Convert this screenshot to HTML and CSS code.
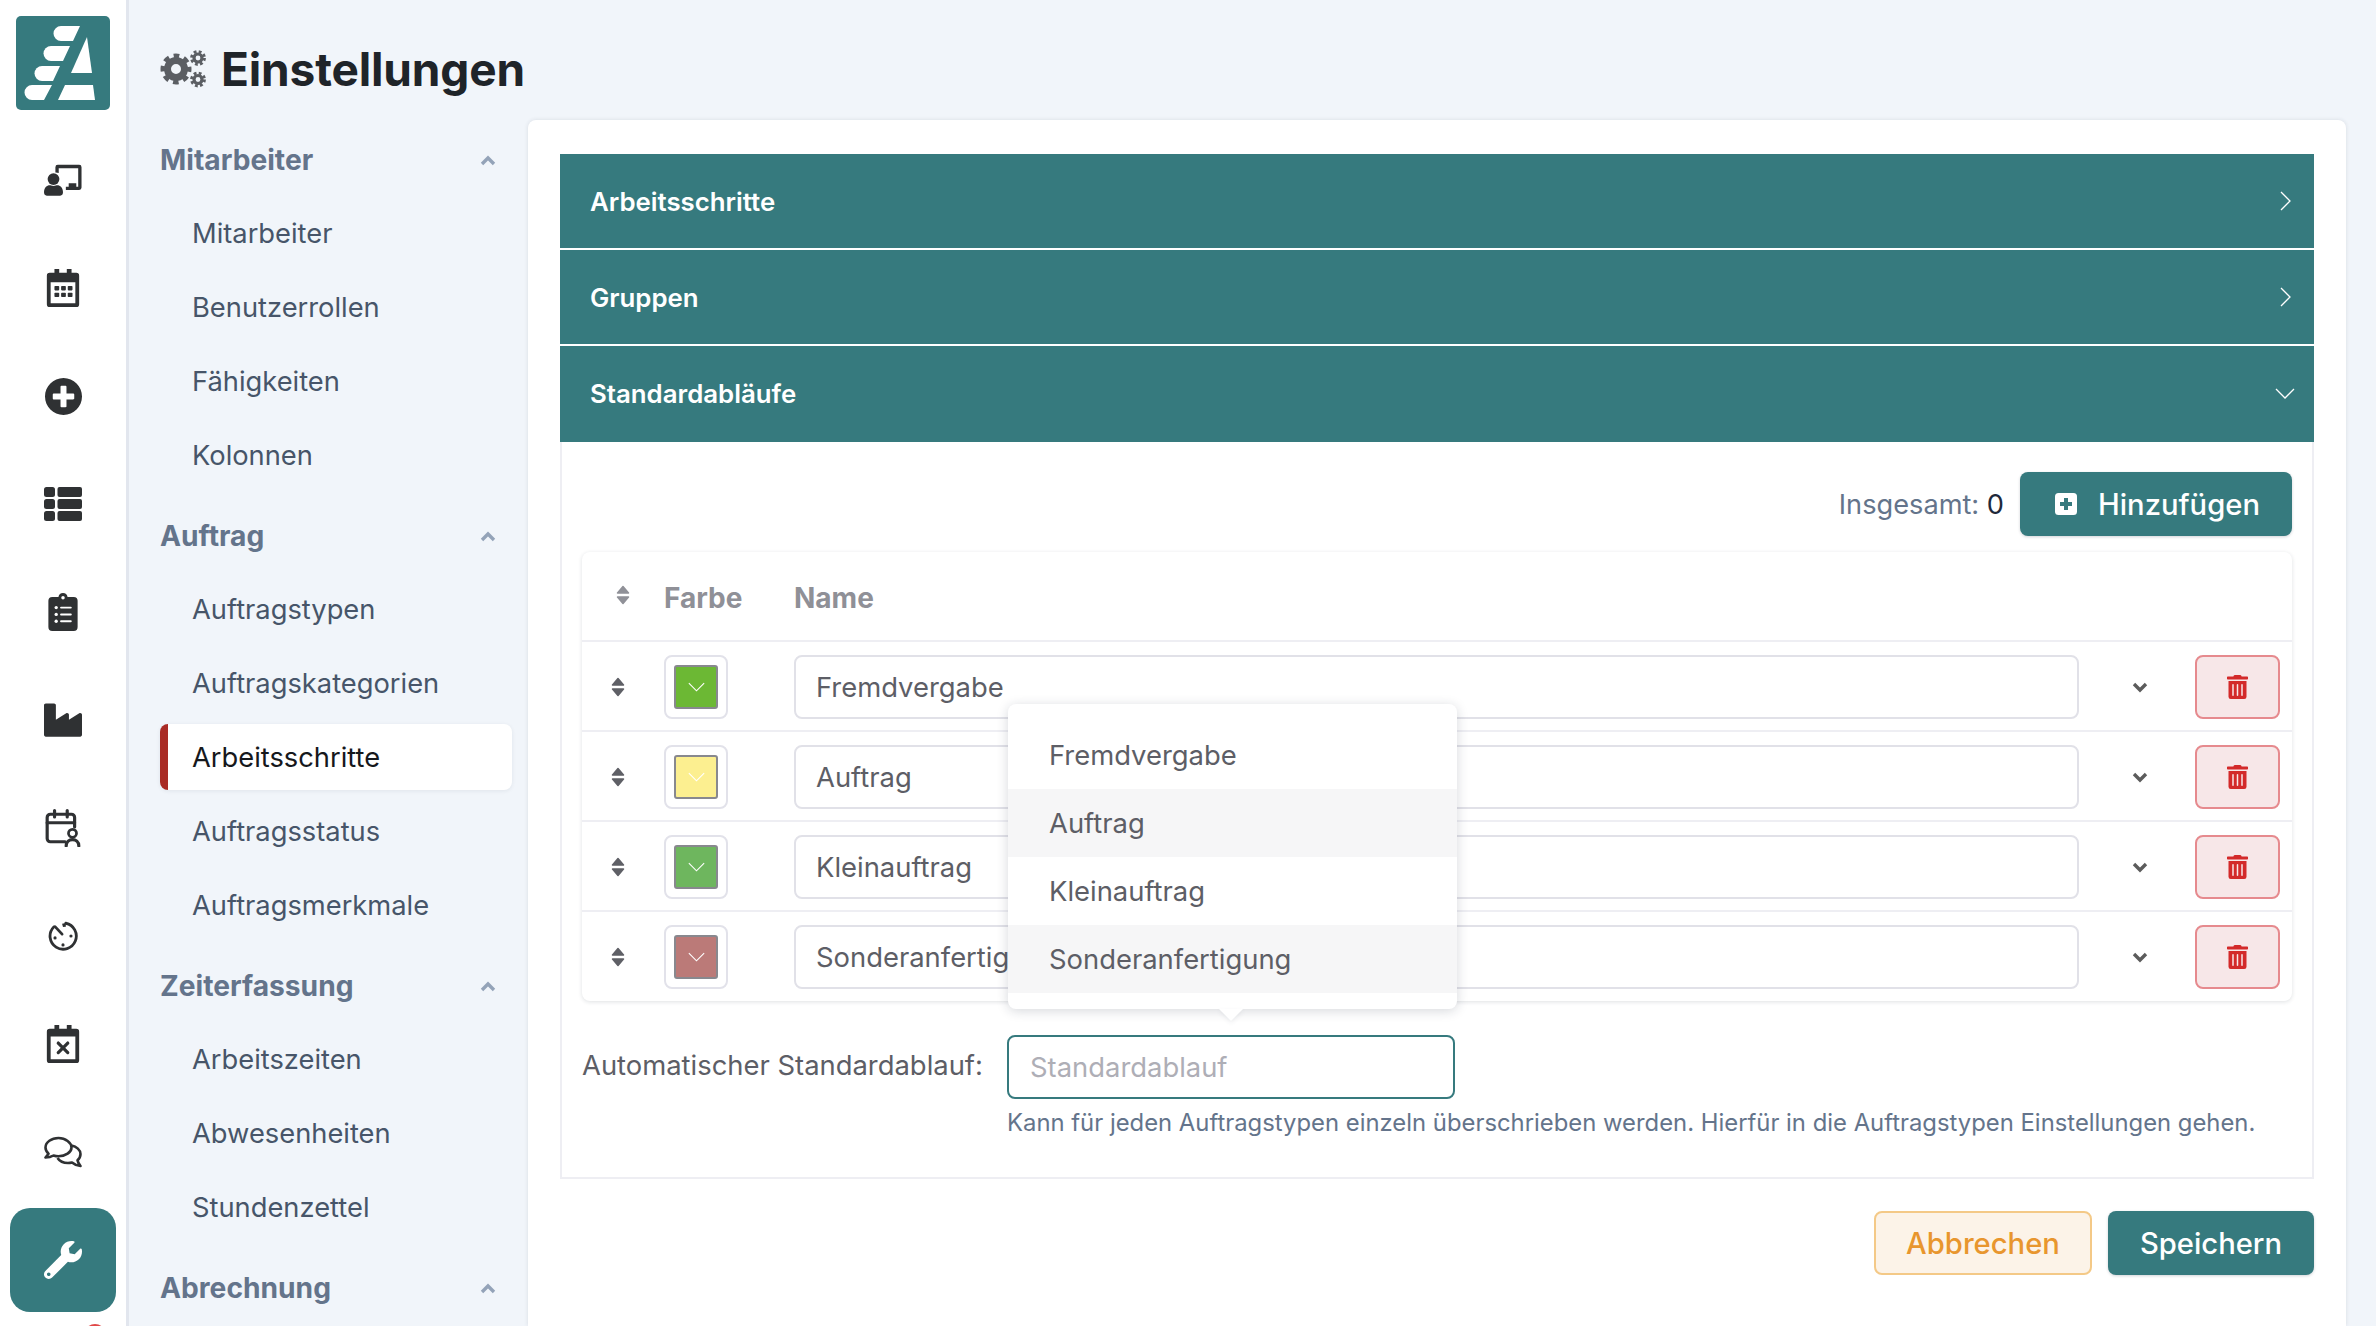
FILE: index.html
```html
<!DOCTYPE html>
<html lang="de">
<head>
<meta charset="utf-8">
<title>Einstellungen</title>
<link rel="stylesheet" href="styles.css">
</head>
<body>
<svg class="defs" width="0" height="0" aria-hidden="true">
  <defs>
    <symbol id="sort" viewBox="0 0 14 20"><path d="M7 1.5 12.5 8H1.5ZM1.5 12h11L7 18.500Z" fill="currentColor" stroke="currentColor" stroke-width="1.500" stroke-linejoin="round"/></symbol>
    <symbol id="thin-down" viewBox="0 0 20 11"><path d="M1 1l9 9 9-9" fill="none" stroke="currentColor" stroke-width="1.300"/></symbol>
    <symbol id="thin-right" viewBox="0 0 11 20"><path d="M1 1l9 9-9 9" fill="none" stroke="currentColor" stroke-width="1.300"/></symbol>
    <symbol id="up" viewBox="0 0 16 11"><path d="M2 9l6-6 6 6" fill="none" stroke="currentColor" stroke-width="3.400"/></symbol>
    <symbol id="down-bold" viewBox="0 0 16 11"><path d="M2 2l6 6 6-6" fill="none" stroke="currentColor" stroke-width="3.400"/></symbol>
    <symbol id="trash" viewBox="0 0 448 512"><path fill="currentColor" d="M32 464a48 48 0 0 0 48 48h288a48 48 0 0 0 48-48V128H32zm272-256a16 16 0 0 1 32 0v224a16 16 0 0 1-32 0zm-96 0a16 16 0 0 1 32 0v224a16 16 0 0 1-32 0zm-96 0a16 16 0 0 1 32 0v224a16 16 0 0 1-32 0zM432 32H312l-9.400-18.700A24 24 0 0 0 281.100 0H166.800a23.720 23.720 0 0 0-21.400 13.300L136 32H16A16 16 0 0 0 0 48v32a16 16 0 0 0 16 16h416a16 16 0 0 0 16-16V48a16 16 0 0 0-16-16z"/></symbol>
  </defs>
</svg>
<div class="app">
  <nav class="rail">
    <svg class="logo" viewBox="0 0 94 94">
      <rect width="94" height="94" rx="5" fill="#367a7e"/>
      <g fill="#fff">
        <path d="M45 10H64L57 25H45A7.500 7.500 0 0 1 45 10Z"/>
        <path d="M35 30H54L47 45H35A7.500 7.500 0 0 1 35 30Z"/>
        <path d="M26 50H44L37 65H26A7.500 7.500 0 0 1 26 50Z"/>
        <path d="M16 69H36L28 84H16A7.500 7.500 0 0 1 16 69Z"/>
        <path d="M71 21 76 57H55Z"/>
        <path d="M49 69H77L79 84H42Z"/>
      </g>
    </svg>
    <div class="rail-items">
      <a class="rail-item">
        <svg viewBox="0 0 40 34" class="ri"><path d="M12 3.500A2.500 2.500 0 0 1 14.500 1H37a2.500 2.500 0 0 1 2.500 2.500V25A2.500 2.500 0 0 1 37 27.500H23V24h3v-3.500h8V24h2V4.500H15.500v5A10 10 0 0 0 12 9Z" fill="currentColor"/><circle cx="10" cy="16" r="6.200" fill="currentColor"/><path d="M0 30c0-5 3-7.500 6-7.500 1 0 2 .7 4 .7s3-.7 4-.7c3 0 6 2.500 6 7.500 0 2-1 3.500-3 3.500H3C1 33.500 0 32 0 30Z" fill="currentColor"/></svg>
      </a>
      <a class="rail-item">
        <svg viewBox="0 0 34 40" class="ri"><path fill-rule="evenodd" d="M8 0h5v4h8V0h5v4h5a3 3 0 0 1 3 3v30a3 3 0 0 1-3 3H3a3 3 0 0 1-3-3V7a3 3 0 0 1 3-3h5ZM4 14v22h26V14Z" fill="currentColor"/><g fill="currentColor"><rect x="8" y="18" width="5" height="4.500" rx=".8"/><rect x="15" y="18" width="5" height="4.500" rx=".8"/><rect x="22" y="18" width="5" height="4.500" rx=".8"/><rect x="8" y="25" width="5" height="4.500" rx=".8"/><rect x="15" y="25" width="5" height="4.500" rx=".8"/><rect x="22" y="25" width="5" height="4.500" rx=".8"/></g></svg>
      </a>
      <a class="rail-item">
        <svg viewBox="8 8 496 496" class="ri ri-38"><path fill="currentColor" d="M256 8C119 8 8 119 8 256s111 248 248 248 248-111 248-248S393 8 256 8zm144 276c0 6.600-5.400 12-12 12h-92v92c0 6.600-5.400 12-12 12h-56c-6.600 0-12-5.400-12-12v-92h-92c-6.600 0-12-5.400-12-12v-56c0-6.600 5.400-12 12-12h92v-92c0-6.600 5.400-12 12-12h56c6.600 0 12 5.400 12 12v92h92c6.600 0 12 5.400 12 12v56z"/></svg>
      </a>
      <a class="rail-item">
        <svg viewBox="0 0 38 34" class="ri"><g fill="currentColor"><rect width="11" height="10" rx="2.500"/><rect y="12" width="11" height="10" rx="2.500"/><rect y="24" width="11" height="10" rx="2.500"/><rect x="13.500" width="24.500" height="10" rx="2"/><rect x="13.500" y="12" width="24.500" height="10" rx="2"/><rect x="13.500" y="24" width="24.500" height="10" rx="2"/></g></svg>
      </a>
      <a class="rail-item">
        <svg viewBox="0 0 30 39" class="ri ri-30"><path fill="currentColor" fill-rule="evenodd" d="M15 0a5 5 0 0 1 4.700 4H26a4 4 0 0 1 4 4v27a4 4 0 0 1-4 4H4a4 4 0 0 1-4-4V8a4 4 0 0 1 4-4h6.300A5 5 0 0 1 15 0Zm0 3a1.800 1.800 0 1 0 0 3.600A1.800 1.800 0 0 0 15 3Z"/><g fill="#fff"><circle cx="8" cy="15" r="1.700"/><circle cx="8" cy="22" r="1.700"/><circle cx="8" cy="29" r="1.700"/><rect x="12" y="14" width="12" height="2" rx="1"/><rect x="12" y="21" width="12" height="2" rx="1"/><rect x="12" y="28" width="12" height="2" rx="1"/></g></svg>
      </a>
      <a class="rail-item">
        <svg viewBox="0 32 512 448" class="ri"><path fill="currentColor" d="M475.115 163.781L336 252.309v-68.280c0-18.916-20.931-30.399-36.885-20.248L160 252.309V56c0-13.255-10.745-24-24-24H24C10.745 32 0 42.745 0 56v400c0 13.255 10.745 24 24 24h464c13.255 0 24-10.745 24-24V184.029c0-18.917-20.931-30.399-36.885-20.248z"/></svg>
      </a>
      <a class="rail-item">
        <svg viewBox="0 0 34 36" class="ri"><g fill="none" stroke="currentColor" stroke-width="3" stroke-linecap="round" stroke-linejoin="round"><path d="M19 31H5a3 3 0 0 1-3-3V8a3 3 0 0 1 3-3h20a3 3 0 0 1 3 3v9"/><path d="M2 13h26M9 1.500v6M21 1.500v6"/></g><circle cx="26" cy="23" r="3.800" fill="none" stroke="currentColor" stroke-width="2.600"/><path d="M20 35c0-4 3-6 6-6s6 2 6 6" fill="none" stroke="currentColor" stroke-width="3" stroke-linecap="round"/></svg>
      </a>
      <a class="rail-item">
        <svg viewBox="0 0 32 32" class="ri ri-30"><g fill="none" stroke="currentColor" stroke-width="3" stroke-linecap="round"><path d="M19 2.400A14 14 0 1 1 6 6.500"/><path d="M7.500 6 15 14"/></g><g fill="currentColor"><circle cx="16" cy="25.500" r="1.700"/><circle cx="7.500" cy="18" r="1.700"/><circle cx="24.500" cy="16" r="1.700"/><path d="M15 3l4-1v4l-3 .5Z"/></g></svg>
      </a>
      <a class="rail-item">
        <svg viewBox="0 0 34 40" class="ri"><path fill-rule="evenodd" d="M8 0h5v4h8V0h5v4h5a3 3 0 0 1 3 3v30a3 3 0 0 1-3 3H3a3 3 0 0 1-3-3V7a3 3 0 0 1 3-3h5ZM4 12v24h26V12Z" fill="currentColor"/><path d="M12 19l10 10M22 19 12 29" stroke="currentColor" stroke-width="3.400" stroke-linecap="round"/></svg>
      </a>
      <a class="rail-item">
        <svg viewBox="0 0 38 31" class="ri"><g fill="none" stroke="currentColor" stroke-width="2.600" stroke-linejoin="round"><path d="M14.500 1.500C7.500 1.500 1.500 5.700 1.500 11c0 2.600 1.300 4.700 3 6.300L1.500 21c3 0 6-.8 8-2 1.500.5 3.200.800 5 .800 7 0 13-4 13-8.800s-6-9.500-13-9.500Z"/><path d="M27.500 9c5 1 9 4.500 9 8.500 0 2.600-1.200 4.700-3 6.300.4 2.500 2 4.500 3 5.700-3.500-.2-6.500-1.800-8.500-3.500-1.200.3-2.700.5-4 .5-4.500 0-8.500-2-10.500-5"/></g></svg>
      </a>
      <a class="rail-item rail-active">
        <svg viewBox="0 0 512 512" class="ri"><path fill="currentColor" d="M507.730 109.100c-2.240-9.030-13.540-12.090-20.120-5.510l-74.360 74.360-67.880-11.310-11.310-67.880 74.360-74.360c6.620-6.620 3.430-17.900-5.660-20.160-47.380-11.740-99.550.91-136.580 37.930-39.640 39.640-50.550 97.100-34.050 147.200L18.740 402.760c-24.990 24.990-24.990 65.510 0 90.500 24.990 24.990 65.510 24.990 90.500 0l213.210-213.210c50.120 16.710 107.470 5.680 147.370-34.220 37.070-37.070 49.700-89.320 37.910-136.730zM64 472c-13.250 0-24-10.750-24-24 0-13.260 10.750-24 24-24s24 10.740 24 24c0 13.250-10.750 24-24 24z"/></svg>
      </a>
      <span class="badge"></span>
    </div>
  </nav>
  <main class="main">
    <header class="page-head">
      <svg class="gears" viewBox="0 0 46 38">
        <g fill="none" stroke="currentColor">
          <circle cx="16" cy="19" r="8.500" stroke-width="7"/>
          <circle cx="16" cy="19" r="13" stroke-width="5" stroke-dasharray="5.500 4.710" stroke-dashoffset="2.700"/>
          <circle cx="38" cy="8" r="4" stroke-width="3.200"/>
          <circle cx="38" cy="8" r="6.500" stroke-width="2.800" stroke-dasharray="2.800 2.300"/>
          <circle cx="38" cy="29.500" r="4" stroke-width="3.200"/>
          <circle cx="38" cy="29.500" r="6.500" stroke-width="2.800" stroke-dasharray="2.800 2.300"/>
        </g>
      </svg>
      <h1 class="page-title">Einstellungen</h1>
    </header>
    <div class="columns">
      <aside class="side">
        <section class="group">
          <h2 class="group-head">Mitarbeiter<svg class="group-chev"><use href="#up"/></svg></h2>
          <ul class="group-list">
            <li class="side-item">Mitarbeiter</li>
            <li class="side-item">Benutzerrollen</li>
            <li class="side-item">Fähigkeiten</li>
            <li class="side-item">Kolonnen</li>
          </ul>
        </section>
        <section class="group">
          <h2 class="group-head">Auftrag<svg class="group-chev"><use href="#up"/></svg></h2>
          <ul class="group-list">
            <li class="side-item">Auftragstypen</li>
            <li class="side-item">Auftragskategorien</li>
            <li class="side-item side-active">Arbeitsschritte</li>
            <li class="side-item">Auftragsstatus</li>
            <li class="side-item">Auftragsmerkmale</li>
          </ul>
        </section>
        <section class="group">
          <h2 class="group-head">Zeiterfassung<svg class="group-chev"><use href="#up"/></svg></h2>
          <ul class="group-list">
            <li class="side-item">Arbeitszeiten</li>
            <li class="side-item">Abwesenheiten</li>
            <li class="side-item">Stundenzettel</li>
          </ul>
        </section>
        <section class="group">
          <h2 class="group-head">Abrechnung<svg class="group-chev"><use href="#up"/></svg></h2>
        </section>
      </aside>
      <section class="card">
        <div class="acc-head">Arbeitsschritte<svg class="acc-right"><use href="#thin-right"/></svg></div>
        <div class="acc-head">Gruppen<svg class="acc-right"><use href="#thin-right"/></svg></div>
        <div class="acc-head acc-open">Standardabläufe<svg class="acc-down"><use href="#thin-down"/></svg></div>
        <div class="acc-panel">
          <div class="toolbar">
            <span class="total">Insgesamt: <b class="total-num">0</b></span>
            <button class="btn btn-primary btn-add">
              <svg class="plus-square" viewBox="0 0 22 22"><rect width="22" height="22" rx="3.500" fill="#fff"/><path d="M11 5v12M5 11h12" stroke="#367a7e" stroke-width="4"/></svg>
              Hinzufügen
            </button>
          </div>
          <div class="table">
            <div class="row row-head">
              <svg class="sort sort-head"><use href="#sort"/></svg>
              <span>Farbe</span>
              <span class="cell-name">Name</span>
            </div>
            <div class="row">
              <svg class="sort"><use href="#sort"/></svg>
              <div class="color-btn"><span class="swatch sw-green"><svg class="sw-chev"><use href="#thin-down"/></svg></span></div>
              <input class="field cell-name" value="Fremdvergabe" readonly>
              <svg class="row-chev"><use href="#down-bold"/></svg>
              <button class="del"><svg class="trash"><use href="#trash"/></svg></button>
            </div>
            <div class="row">
              <svg class="sort"><use href="#sort"/></svg>
              <div class="color-btn"><span class="swatch sw-yellow"><svg class="sw-chev"><use href="#thin-down"/></svg></span></div>
              <input class="field cell-name" value="Auftrag" readonly>
              <svg class="row-chev"><use href="#down-bold"/></svg>
              <button class="del"><svg class="trash"><use href="#trash"/></svg></button>
            </div>
            <div class="row">
              <svg class="sort"><use href="#sort"/></svg>
              <div class="color-btn"><span class="swatch sw-lime"><svg class="sw-chev"><use href="#thin-down"/></svg></span></div>
              <input class="field cell-name" value="Kleinauftrag" readonly>
              <svg class="row-chev"><use href="#down-bold"/></svg>
              <button class="del"><svg class="trash"><use href="#trash"/></svg></button>
            </div>
            <div class="row row-last">
              <svg class="sort"><use href="#sort"/></svg>
              <div class="color-btn"><span class="swatch sw-rose"><svg class="sw-chev"><use href="#thin-down"/></svg></span></div>
              <input class="field cell-name" value="Sonderanfertigung" readonly>
              <svg class="row-chev"><use href="#down-bold"/></svg>
              <button class="del"><svg class="trash"><use href="#trash"/></svg></button>
            </div>
          </div>
          <div class="auto-row">
            <label class="auto-label">Automatischer Standardablauf:</label>
            <div class="auto-control">
              <input class="field field-focus" placeholder="Standardablauf">
              <ul class="dropdown">
                <li class="dd-item">Fremdvergabe</li>
                <li class="dd-item dd-shade">Auftrag</li>
                <li class="dd-item">Kleinauftrag</li>
                <li class="dd-item dd-shade">Sonderanfertigung</li>
              </ul>
              <p class="hint">Kann für jeden Auftragstypen einzeln überschrieben werden. Hierfür in die Auftragstypen Einstellungen gehen.</p>
            </div>
          </div>
        </div>
        <div class="actions">
          <button class="btn btn-cancel">Abbrechen</button>
          <button class="btn btn-primary btn-save">Speichern</button>
        </div>
      </section>
    </div>
  </main>
</div>
</body>
</html>
```

FILE: styles.css
```css
* { box-sizing: border-box; }
html, body { margin: 0; height: 100%; overflow: hidden; }
body { font-family: Inter, "Liberation Sans", sans-serif; font-size: 28px; background: #f1f5fa; color: #1e293b; }
.defs { position: absolute; }
ul { list-style: none; margin: 0; padding: 0; }
button, input { font-family: inherit; }

.app { display: flex; height: 1326px; overflow: hidden; }

/* icon rail */
.rail { width: 129px; flex: none; background: #fff; border-right: 3px solid #e2e6ee; padding: 16px 0 0 10px; color: #2f3133; }
.logo { display: block; width: 94px; height: 94px; margin-left: 6px; }
.rail-items { position: relative; margin-top: 16px; width: 106px; }
.rail-item { display: flex; align-items: center; justify-content: center; height: 108px; }
.ri { width: 38px; height: 38px; }
.ri-38 { width: 37px; height: 37px; }
.ri-30 { width: 30px; height: 38px; }
.rail-active { background: #367a7e; color: #fff; border-radius: 20px; height: 104px; margin-top: 2px; }
.badge { position: absolute; left: 74px; top: 1198px; width: 22px; height: 22px; border-radius: 50%; background: #e04848; }

/* main */
.main { flex: 1; min-width: 0; display: flex; flex-direction: column; }
.page-head { height: 120px; flex: none; display: flex; align-items: center; gap: 15px; padding: 18px 0 0 31px; }
.gears { width: 46px; height: 38px; color: #5b5e63; }
.page-title { margin: 0; font-size: 46px; font-weight: 700; letter-spacing: -0.15px; color: #1f2429; line-height: 1; }

.columns { flex: 1; display: flex; min-height: 0; }

/* settings sidebar */
.side { width: 399px; flex: none; padding: 11px 16px 0 31px; }
.group { margin-bottom: 19px; }
.group-head { display: flex; align-items: center; justify-content: space-between; height: 58px; margin: 0; font-size: 28.200px; font-weight: 700; color: #64748b; }
.group-chev { width: 16px; height: 11px; margin-right: 16px; color: #94a3b8; }
.group-list { display: flex; flex-direction: column; gap: 8px; margin-top: 11px; }
.side-item { display: flex; align-items: center; height: 66px; padding-left: 32px; color: #475569; font-size: 27.300px; }
.side-active { background: #fff; color: #16181c; border-left: 8px solid #a92b25; padding-left: 24px; border-radius: 8px; box-shadow: 0 1px 4px rgba(30, 41, 59, .08); }

/* card */
.card { flex: 1; min-width: 0; margin-right: 30px; padding: 34px 32px 0; background: #fff; border-radius: 8px 8px 0 0; box-shadow: 0 0 4px rgba(30, 41, 59, .12); }
.acc-head { display: flex; align-items: center; justify-content: space-between; height: 94px; margin-bottom: 2px; padding: 0 19px 0 30px; background: #367a7e; color: #fff; font-size: 25.800px; font-weight: 600; }
.acc-open { height: 96px; margin-bottom: 0; padding-bottom: 1px; }
.acc-right { width: 11px; height: 20px; margin-right: 4px; }
.acc-down { width: 20px; height: 11px; }
.acc-panel { height: 737px; padding: 30px 20px 0; border: 2px solid #eeeef3; border-top: 0; }

.toolbar { display: flex; align-items: center; justify-content: flex-end; gap: 16px; }
.total { color: #64748b; font-size: 27.200px; }
.total-num { color: #1e293b; font-weight: 400; }
.btn { display: inline-flex; align-items: center; justify-content: center; height: 64px; border-radius: 8px; font-size: 29.200px; font-weight: 500; border: 0; }
.btn-primary { background: #367a7e; color: #fff; box-shadow: 0 1px 3px rgba(30, 41, 59, .2); }
.btn-add { width: 272px; gap: 21px; padding: 0 0 0 3px; }
.plus-square { width: 22px; height: 22px; }

/* table */
.table { margin-top: 16px; background: #fff; border-radius: 8px; box-shadow: 0 1px 4px rgba(30, 41, 59, .14); }
.row { display: grid; grid-template-columns: 82px 64px 66px 1285px 116px 85px; align-items: center; height: 90px; padding: 2px 12px 0 0; border-bottom: 2px solid #eeeef3; color: #5d5e66; }
.cell-name { grid-column: 4; }
.row-head { padding-top: 4px; font-weight: 700; color: #8f9097; font-size: 28px; }
.row-last { height: 89px; padding-top: 1px; border-bottom: 0; }
.sort { width: 14px; height: 20px; margin-left: 29px; color: #5f6066; }
.sort-head { margin-left: 34px; margin-top: -6px; color: #909198; }
.color-btn { display: flex; align-items: center; justify-content: center; width: 64px; height: 64px; border: 2px solid #e2e2ea; border-radius: 8px; }
.swatch { display: flex; align-items: center; justify-content: center; width: 44px; height: 44px; border: 2px solid #88888e; border-radius: 3px; color: #fff; }
.sw-green { background: #6cb834; }
.sw-yellow { background: #fcef90; }
.sw-lime { background: #6eb65e; }
.sw-rose { background: #bb7a78; }
.sw-chev { width: 17px; height: 10px; }
.field { display: block; width: 100%; height: 64px; padding: 0 20px; border: 2px solid #e1e1e8; border-radius: 8px; background: #fff; color: #5d5e66; font-size: 27.400px; outline: 0; }
.field::placeholder { color: #aeaeb6; opacity: 1; }
.field-focus { border-color: #367a7e; padding-left: 21px; }
.row-chev { width: 16px; height: 11px; margin-left: 53px; color: #5c5c5c; }
.del { display: flex; align-items: center; justify-content: center; width: 85px; height: 64px; padding: 0; background: #f7e7e8; border: 2px solid #e68a8e; border-radius: 8px; color: #d32a2a; }
.trash { width: 21px; height: 24px; }

/* automatic row */
.auto-row { display: flex; align-items: flex-start; margin-top: 34px; }
.auto-label { width: 425px; flex: none; padding-top: 13px; color: #5d5e66; font-size: 27.400px; line-height: 34px; }
.auto-control { position: relative; flex: 1; min-width: 0; }
.auto-control .field { width: 448px; }
.hint { margin: 9px 0 0; color: #64748b; font-size: 23.850px; line-height: 30px; white-space: nowrap; }

/* dropdown over table */
.dropdown { position: absolute; left: 1px; top: -331px; width: 449px; height: 305px; padding: 17px 0 16px; background: #fff; border-radius: 8px; box-shadow: 0 2px 12px rgba(30, 41, 59, .18); }
.dropdown::after { content: ""; position: absolute; left: 211px; bottom: -12px; width: 0; height: 0; border-left: 12px solid transparent; border-right: 12px solid transparent; border-top: 12px solid #fff; filter: drop-shadow(0 2px 2px rgba(30, 41, 59, .08)); }
.dd-item { display: flex; align-items: center; height: 68px; padding-left: 41px; color: #5d5e66; font-size: 27.400px; }
.dd-shade { background: #f6f6f7; }

/* actions */
.actions { display: flex; justify-content: flex-end; gap: 16px; margin-top: 32px; }
.btn-cancel { width: 218px; background: #fcf3e8; border: 2px solid #f4c987; color: #e8962e; }
.btn-save { width: 206px; }
```
